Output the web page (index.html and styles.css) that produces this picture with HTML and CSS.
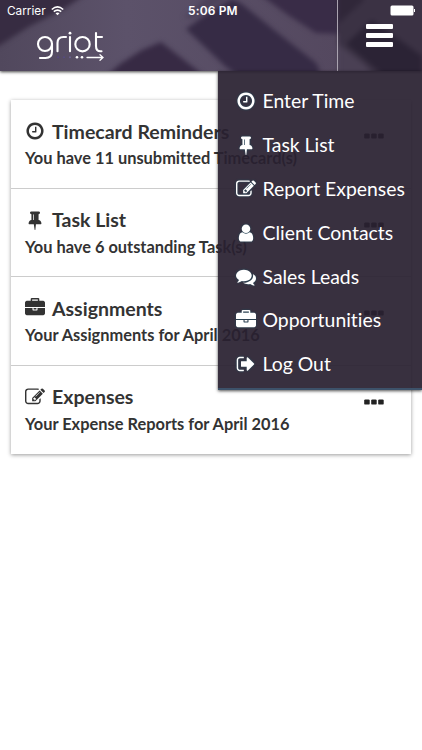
FILE: index.html
```html
<!DOCTYPE html>
<html lang="en">
<head>
<meta charset="utf-8">
<title>griot</title>
<link rel="stylesheet" href="styles.css">
</head>
<body>
<svg class="sprite" aria-hidden="true">
  <symbol id="clock" viewBox="0 0 1792 1792"><path d="M1024 544v448q0 14-9 23t-23 9h-320q-14 0-23-9t-9-23v-64q0-14 9-23t23-9h224v-352q0-14 9-23t23-9h64q14 0 23 9t9 23zm416 352q0-148-73-273t-198-198-273-73-273 73-198 198-73 273 73 273 198 198 273 73 273-73 198-198 73-273zm224 0q0 209-103 385.500t-279.500 279.500-385.500 103-385.500-103-279.500-279.500-103-385.500 103-385.500 279.500-279.500 385.500-103 385.500 103 279.500 279.500 103 385.500z"/></symbol>
  <symbol id="pin" viewBox="0 0 1792 1792"><path d="M800 864v-448q0-14-9-23t-23-9-23 9-9 23v448q0 14 9 23t23 9 23-9 9-23zm672 352q0 26-19 45t-45 19h-429l-51 483q-2 12-10.500 20.500t-20.500 8.500h-1q-27 0-32-27l-76-485h-404q-26 0-45-19t-19-45q0-123 78.500-221.500t177.500-98.500v-512q-52 0-90-38t-38-90 38-90 90-38h640q52 0 90 38t38 90-38 90-90 38v512q99 0 177.500 98.500t78.500 221.500z"/></symbol>
  <symbol id="edit" viewBox="0 0 1792 1792"><path d="M888 1184l116-116-152-152-116 116v56h96v96h56zm440-720q-16-16-33 1l-350 350q-17 17-1 33t33-1l350-350q17-17 1-33zm80 594v190q0 119-84.500 203.500t-203.500 84.500h-832q-119 0-203.500-84.500t-84.500-203.500v-832q0-119 84.500-203.500t203.500-84.500h832q63 0 117 25 15 7 18 23 3 17-9 29l-49 49q-14 14-32 8-23-6-45-6h-832q-66 0-113 47t-47 113v832q0 66 47 113t113 47h832q66 0 113-47t47-113v-126q0-13 9-22l64-64q15-15 35-7t20 29zm-96-738l288 288-672 672h-288v-288zm444 132l-92 92-288-288 92-92q28-28 68-28t68 28l152 152q28 28 28 68t-28 68z"/></symbol>
  <symbol id="user" viewBox="0 0 1792 1792"><path d="M1536 1399q0 109-62.500 187t-150.500 78h-854q-88 0-150.500-78t-62.500-187q0-85 8.500-160.500t31.500-152 58.500-131 94-89 134.500-34.500q131 128 313 128t313-128q76 0 134.500 34.500t94 89 58.500 131 31.500 152 8.500 160.500zm-256-887q0 159-112.500 271.500t-271.500 112.500-271.500-112.500-112.500-271.500 112.500-271.500 271.500-112.500 271.500 112.500 112.500 271.500z"/></symbol>
  <symbol id="comments" viewBox="0 0 1792 1792"><path d="M1408 768q0 139-94 257t-256.500 186.500-353.500 68.500q-86 0-176-16-124 88-278 128-36 9-86 16h-3q-11 0-20.500-8t-11.500-21q-1-3-1-6.500t.5-6.500 2-6l2.500-5 3.500-5.500 4-5 4.500-5 4-4.500q5-6 23-25t26-29.500 22.500-29 25-38.500 20.500-44q-124-72-195-177t-71-224q0-139 94-257t256.500-186.500 353.500-68.500 353.500 68.500 256.500 186.500 94 257zm384 256q0 120-71 224.500t-195 176.500q10 24 20.500 44t25 38.500 22.500 29 26 29.500 23 25q1 1 4 4.500t4.500 5 4 5 3.500 5.500l2.500 5 2 6 .5 6.500-1 6.500q-3 14-13 22t-22 7q-50-7-86-16-154-40-278-128-90 16-176 16-271 0-472-132 58 4 88 4 161 0 309-45t264-129q125-92 192-212t67-254q0-77-23-152 129 71 204 178t75 230z"/></symbol>
  <symbol id="briefcase" viewBox="0 0 1792 1792"><path d="M640 256h512v-128h-512v128zm1152 640v480q0 66-47 113t-113 47h-1472q-66 0-113-47t-47-113v-480h672v160q0 26 19 45t45 19h320q26 0 45-19t19-45v-160h672zm-768 0v128h-256v-128h256zm768-480v384h-1792v-384q0-66 47-113t113-47h352v-160q0-40 28-68t68-28h576q40 0 68 28t28 68v160h352q66 0 113 47t47 113z"/></symbol>
  <symbol id="signout" viewBox="0 0 1792 1792"><path d="M704 1440q0 4 1 20t.5 26.500-3 23.500-10 19.500-20.500 6.500h-320q-119 0-203.500-84.500t-84.500-203.500v-704q0-119 84.500-203.500t203.500-84.500h320q13 0 22.500 9.500t9.500 22.500q0 4 1 20t.5 26.500-3 23.500-10 19.500-20.500 6.500h-320q-66 0-113 47t-47 113v704q0 66 47 113t113 47h312l11.500 1 11.500 3 8 5.500 7 9 2 13.500zm928-544q0 26-19 45l-544 544q-19 19-45 19t-45-19-19-45v-288h-448q-26 0-45-19t-19-45v-384q0-26 19-45t45-19h448v-288q0-26 19-45t45-19 45 19l544 544q19 19 19 45z"/></symbol>
  <symbol id="dots" viewBox="0 0 20 6"><rect x="0.200" y="0.400" width="5.500" height="5.200" rx="1.200"/><rect x="7.200" y="0.400" width="5.500" height="5.200" rx="1.200"/><rect x="14.200" y="0.400" width="5.500" height="5.200" rx="1.200"/></symbol>
</svg>

<header class="header">
  <svg class="backdrop" width="422" height="71" viewBox="0 0 422 71" aria-hidden="true">
    <defs>
      <filter id="soft" x="-20%" y="-20%" width="140%" height="140%" color-interpolation-filters="sRGB"><feGaussianBlur stdDeviation="2.500"/></filter>
      <linearGradient id="base"><stop offset="0" stop-color="#51485d"/><stop offset=".3" stop-color="#5c526a"/><stop offset=".8" stop-color="#54485f"/></linearGradient>
    </defs>
    <rect width="422" height="71" fill="url(#base)"/>
    <g filter="url(#soft)">
      <path d="M-10-10H92L62 10 30 26 0 45l-10 5z" fill="#372c42"/>
      <path d="M104 78l16-14 22-14 19-8 46 36z" fill="#372a44"/>
      <path d="M186 29l22-16 24-14 10 5 32 26 42 33 4 8-8 10h-66l-20-14z" fill="#362b45"/>
      <path d="M236-10L224 0l-30 18-10 0 30-28z" fill="#4c425a"/>
      <path d="M262-10h78v44l-24-1-28-18-30-22z" fill="#392c47"/>
      <path d="M338-10h94v90h-94z" fill="#3b3244"/>
      <path d="M338 44l26 20 12 14h-38z" fill="#4a4054"/>
      <path d="M346 44l26-24 50 36v20h-38l-14-12z" fill="#2b2335"/>
      <path d="M338-8h24l2 8-26 24z" fill="#302739"/>
    </g>
  </svg>
  <div class="brand-area">
    <div class="status"><span class="carrier">Carrier</span>
      <svg class="wifi" width="13" height="10" viewBox="0 0 13 10" fill="none" stroke="#fff" stroke-width="1.600"><path d="M.8 3.500Q6.500-1.600 12.200 3.500M2.800 5.700Q6.500 2.400 10.200 5.700"/><path d="M6.500 9.300L4.500 7.300Q6.500 5.700 8.500 7.300z" fill="#fff" stroke="none"/></svg>
      <span class="time">5:06 PM</span>
    </div>
    <svg class="logo" width="70" height="32" viewBox="35 30 70 32" fill="none" stroke="#fff" stroke-width="2.100" stroke-linecap="round" role="img" aria-label="griot">
      <circle cx="45" cy="44" r="7"/><path d="M52 44v7.500q0 6.500-6.500 6.500H40M57.500 51.300V43q0-6 6-6H66M70 37v14.300M96 33v13q0 5.300 4.500 5.300h1M96 37h6"/><circle cx="82.500" cy="44.200" r="7.200"/><circle cx="70" cy="33.200" r="1.400" fill="#fff" stroke="none"/>
      <g stroke="none"><circle cx="58" cy="57.300" r="1" fill="#554780"/><circle cx="64" cy="57.300" r="1" fill="#554b83"/><circle cx="70" cy="57.300" r="1" fill="#6a6090"/><circle cx="77" cy="57.300" r="1.300" fill="#fff"/><circle cx="82" cy="57.300" r="1.300" fill="#fff"/></g>
      <path d="M87 57.500h15.500M100 54.700l3 2.800-3 2.800" stroke-width="1.300"/>
    </svg>
  </div>
  <div class="toggle">
    <span class="battery"></span>
    <div class="bars"><i></i><i></i><i></i></div>
  </div>
</header>

<nav class="menu">
  <a><svg><use href="#clock"/></svg><span>Enter Time</span></a>
  <a><svg><use href="#pin"/></svg><span>Task List</span></a>
  <a><svg><use href="#edit"/></svg><span>Report Expenses</span></a>
  <a><svg><use href="#user"/></svg><span>Client Contacts</span></a>
  <a><svg><use href="#comments"/></svg><span>Sales Leads</span></a>
  <a><svg><use href="#briefcase"/></svg><span>Opportunities</span></a>
  <a><svg><use href="#signout"/></svg><span>Log Out</span></a>
</nav>

<main class="list">
  <section class="item"><div><h2><svg><use href="#clock"/></svg><span>Timecard Reminders</span></h2><p>You have 11 unsubmitted Timecard(s)</p></div><svg class="more"><use href="#dots"/></svg></section>
  <section class="item"><div><h2><svg><use href="#pin"/></svg><span>Task List</span></h2><p>You have 6 outstanding Task(s)</p></div><svg class="more"><use href="#dots"/></svg></section>
  <section class="item"><div><h2><svg><use href="#briefcase"/></svg><span>Assignments</span></h2><p>Your Assignments for April 2016</p></div><svg class="more"><use href="#dots"/></svg></section>
  <section class="item"><div><h2><svg><use href="#edit"/></svg><span>Expenses</span></h2><p>Your Expense Reports for April 2016</p></div><svg class="more"><use href="#dots"/></svg></section>
</main>
</body>
</html>
```
FILE: styles.css
```css
* { box-sizing: border-box; }
body { margin: 0; height: 750px; overflow: hidden; background: #fff; color: #333; font-family: Lato, "Liberation Sans", sans-serif; font-variant-ligatures: none; }
svg { fill: currentColor; flex: none; }
.sprite { position: absolute; width: 0; height: 0; }
.header { position: relative; display: flex; height: 71px; color: #fff; background: #574c66; box-shadow: 0 1px 3px rgba(0,0,0,.75); }
.backdrop { position: absolute; left: 0; top: 0; }
.brand-area { position: relative; width: 338px; border-right: 1px solid #aaa3b0; }
.status { display: flex; align-items: center; height: 22px; padding-left: 7px; font: 12px/22px Inter, "Liberation Sans", sans-serif; }
.carrier { width: 43px; font-size: 11.800px; }
.wifi { fill: none; margin-left: 1px; }
.time { margin-left: 124px; font-weight: 600; font-size: 11.900px; letter-spacing: .2px; white-space: nowrap; }
.logo { display: block; margin: 8px 0 0 35px; fill: none; }
.toggle { position: relative; flex: 1; display: flex; flex-direction: column; }
.battery { width: 22px; height: 9px; margin: 6px 0 0 53px; border-radius: 1px; background: #fff; box-shadow: 0 0 0 .5px #fff; }
.battery::after { content: ""; display: block; width: 1px; height: 3px; margin: 3px 0 0 23px; background: #fff; }
.bars { display: flex; flex-direction: column; gap: 4px; width: 27px; margin: 9px 0 0 28px; }
.bars i { height: 5px; border-radius: 1px; background: #fff; }
.menu { position: absolute; z-index: 2; top: 71px; right: 0; width: 204px; height: 319px; padding: 8.500px 0 0 17.500px; color: #fff; background: rgba(41,32,48,.93); border-bottom: 2px solid #3d526a; box-shadow: 0 1px 3px rgba(0,0,0,.7); }
.menu a { display: flex; align-items: center; height: 43.800px; gap: 7px; font-size: 19.400px; white-space: nowrap; }
.menu svg { width: 20px; height: 20px; filter: drop-shadow(0 0 1px #234b5c); }
.menu span { line-height: 24px; }
.list { margin: 29px 11px 0; height: 354px; background: #fff; box-shadow: 0 1px 4px rgba(0,0,0,.4); }
.item { display: flex; justify-content: space-between; height: 88.600px; padding: 18px 27px 0 14px; border-bottom: 1px solid #ccc; }
.item:last-child { border-bottom: 0; }
h2 { display: flex; align-items: center; gap: 7px; height: 26px; margin: 0; font-size: 19.500px; font-weight: 700; white-space: nowrap; }
h2 svg { width: 20px; height: 20px; }
p { margin: 2px 0 0; font-size: 16.400px; line-height: 24px; font-weight: 700; white-space: nowrap; }
.more { width: 20px; height: 6px; margin-top: 15px; color: #222; }
```
